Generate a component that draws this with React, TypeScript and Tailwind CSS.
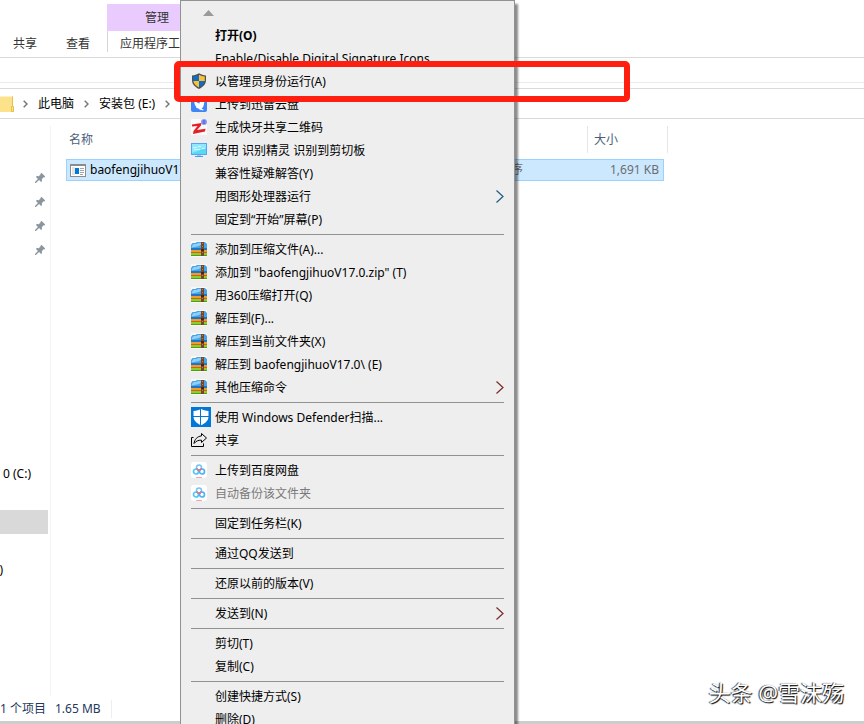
import React from 'react';

type IconName =
  | 'shield'
  | 'xunlei'
  | 'kuaiya'
  | 'monitor'
  | 'archive'
  | 'defender'
  | 'share'
  | 'baidu';

interface MenuItem {
  label: string;
  icon?: IconName;
  bold?: boolean;
  disabled?: boolean;
  arrow?: string;
}

const menuGroups: MenuItem[][] = [
  [
    { label: '打开(O)', bold: true },
    { label: 'Enable/Disable Digital Signature Icons' },
    { label: '以管理员身份运行(A)', icon: 'shield' },
    { label: '上传到迅雷云盘', icon: 'xunlei' },
    { label: '生成快牙共享二维码', icon: 'kuaiya' },
    { label: '使用 识别精灵 识别到剪切板', icon: 'monitor' },
    { label: '兼容性疑难解答(Y)' },
    { label: '用图形处理器运行', arrow: 'text-[#1f5a80]' },
    { label: '固定到“开始”屏幕(P)' },
  ],
  [
    { label: '添加到压缩文件(A)...', icon: 'archive' },
    { label: '添加到 "baofengjihuoV17.0.zip" (T)', icon: 'archive' },
    { label: '用360压缩打开(Q)', icon: 'archive' },
    { label: '解压到(F)...', icon: 'archive' },
    { label: '解压到当前文件夹(X)', icon: 'archive' },
    { label: '解压到 baofengjihuoV17.0\\ (E)', icon: 'archive' },
    { label: '其他压缩命令', icon: 'archive', arrow: 'text-[#7a2a2a]' },
  ],
  [
    { label: '使用 Windows Defender扫描...', icon: 'defender' },
    { label: '共享', icon: 'share' },
  ],
  [
    { label: '上传到百度网盘', icon: 'baidu' },
    { label: '自动备份该文件夹', icon: 'baidu', disabled: true },
  ],
  [{ label: '固定到任务栏(K)' }],
  [{ label: '通过QQ发送到' }],
  [{ label: '还原以前的版本(V)' }],
  [{ label: '发送到(N)', arrow: 'text-[#7a2a2a]' }],
  [{ label: '剪切(T)' }, { label: '复制(C)' }],
  [{ label: '创建快捷方式(S)' }, { label: '删除(D)' }],
];

const MenuIcon: React.FC<{ name: IconName }> = ({ name }) => {
  switch (name) {
    case 'shield':
      return (
        <svg width="16" height="16" viewBox="0 0 16 16">
          <path d="M8 .3C6 1.600 3.600 2.300 1 2.400V7c0 4.200 2.800 7 7 8.900 4.200-1.900 7-4.700 7-8.900V2.400C12.400 2.300 10 1.600 8 .3Z" fill="#4b5056" />
          <path d="M8 1.700C6.200 2.700 4.300 3.300 2.200 3.500V8H8Z" fill="#0f6cc4" />
          <path d="M8 1.700c1.800 1 3.700 1.600 5.800 1.800V8H8Z" fill="#fdbf35" />
          <path d="M2.300 8H8v6.500c-3.100-1.500-5.200-3.600-5.700-6.500Z" fill="#fdbf35" />
          <path d="M13.700 8H8v6.500c3.100-1.500 5.200-3.600 5.700-6.500Z" fill="#0f6cc4" />
        </svg>
      );
    case 'xunlei':
      return (
        <svg width="16" height="16" viewBox="0 0 16 16">
          <rect width="16" height="16" rx="2" fill="#3f85f5" />
          <path d="M3.500 3.500c1 2.500 3 3.500 5 4 0-2 1.500-3.500 4-3.500l1.500 1.500-1 1.500c0 3-1 4.500-2.500 5.500l2.500 1.500c-2.500.5-4.500 0-5.500-1.500L5.500 12 5 10.500c-1.500-1.500-2-4-1.500-7Z" fill="#fff" />
        </svg>
      );
    case 'kuaiya':
      return (
        <svg width="16" height="16" viewBox="0 0 16 16">
          <rect width="16" height="16" rx="1" fill="#fafafa" />
          <path d="M1 5.500 10.500 4 10 6.500 6 11l8.500-1.200-.5 2.600L2 15l.5-3L6.500 7 1 7.600Z" fill="#e32227" />
          <circle cx="13" cy="3" r="3" fill="#8b9af3" />
          <path d="M11.500 2h3M11.500 4h3M13 1v4" stroke="#4c5edb" strokeWidth=".7" />
        </svg>
      );
    case 'monitor':
      return (
        <svg width="16" height="16" viewBox="0 0 16 16">
          <rect x=".5" y="1.500" width="15" height="11" fill="#57d8f7" stroke="#5aa5f2" />
          <path d="M1 2h14v4L1 11Z" fill="#8de9fb" />
          <path d="M2 5.500h4M7 4.500h3M3 7.500h6M11 6.500h3" stroke="#d2f8ff" />
          <path d="M4 14.500h8" stroke="#4e9bec" />
          <path d="M6 13.500h4" stroke="#9cc8f5" />
        </svg>
      );
    case 'archive':
      return (
        <svg width="16" height="16" viewBox="0 0 16 16">
          <rect width="16" height="16" fill="#f8f8f8" />
          <path d="M0 4 1.500 2h3L6 1h8l2 2v5H0Z" fill="#4aa3e4" />
          <path d="M1 5 2.500 3h3L7 2h5L8 5 1 6.500Z" fill="#8fd0f6" />
          <path d="M0 7h16v2H0Z" fill="#1c78c6" />
          <path d="M0 9h16v2H0Z" fill="#f49a2a" />
          <path d="M0 11h16v1H0Z" fill="#c9651f" />
          <path d="M0 12h16v2H0Z" fill="#8bcf2c" />
          <path d="M0 14h16v1H0Z" fill="#579c19" />
          <rect x="10" y="1" width="3" height="14" fill="#7d4421" />
          <path d="M11.500 2v12" stroke="#a5815f" strokeDasharray="1 2" />
          <rect x="10" y="8" width="3" height="2" fill="#4a2413" />
        </svg>
      );
    case 'defender':
      return (
        <svg width="20" height="20" viewBox="0 0 20 20">
          <rect width="20" height="20" fill="#0078d7" />
          <path d="M10 1.800C8 3.200 5.500 3.900 2.500 4v5.200c0 4.200 3 7 7.500 9 4.500-2 7.500-4.800 7.500-9V4c-3-.1-5.500-.8-7.500-2.200Z" fill="#fff" />
          <path d="M9.500 1v18M2 9.500h16" stroke="#0078d7" />
        </svg>
      );
    case 'share':
      return (
        <svg width="16" height="16" viewBox="0 0 16 16" fill="none" stroke="#000">
          <path d="M2.500 5.500h-2v9h12v-3" />
          <path d="M10.500 1.500 15.500 6l-5 4.500V8.200C7 8 5 9.200 3 11.500c.5-4 3-7 7.500-7.600Z" strokeLinejoin="round" />
        </svg>
      );
    case 'baidu':
      return (
        <svg width="16" height="16" viewBox="0 0 16 16" fill="none">
          <rect width="16" height="16" rx="3" fill="#fff" />
          <circle cx="8" cy="5.500" r="2.500" stroke="#6fc6f6" strokeWidth="1.500" />
          <circle cx="5" cy="9.500" r="2.500" stroke="#4bc8f8" strokeWidth="1.700" />
          <circle cx="11" cy="9.500" r="2.500" stroke="#4bb2f5" strokeWidth="1.700" />
          <path d="M5.500 6.500 8 8.700l2.500-2.200" stroke="#f26b81" strokeWidth="1.500" />
          <path d="M5 15.500h6" stroke="#f6a3b4" />
        </svg>
      );
  }
};

const SubmenuArrow: React.FC<{ className: string }> = ({ className }) => (
  <svg width="8" height="14" viewBox="0 0 8 14" fill="none" className={className}>
    <path d="M.5.500 7 6.500.5 12.500" stroke="currentColor" strokeWidth="1.200" />
  </svg>
);

const Crumb: React.FC = () => (
  <svg width="5" height="8" viewBox="0 0 5 8" fill="none" className="shrink-0">
    <path d="M.7.700 4 4 .7 7.300" stroke="#777" strokeWidth="1.500" />
  </svg>
);

const Pin: React.FC = () => (
  <svg width="10" height="10" viewBox="0 0 11 11" fill="#8a959e">
    <path d="M6 .5 7.300 0 11 3.700l-.5 1.300-1-.2-2 2 .2 2.200-1 1L4.500 7.800 1 11H0v-1l3.200-3.500L1 4.300l1-1 2.200.2 2-2Z" />
  </svg>
);

const Ribbon = () => (
  <header className="flex h-[58px] items-end border-b border-[#dadada]">
    <button className="ml-[13px] mb-1 h-[18px]">共享</button>
    <button className="ml-[29px] mb-1 h-[18px]">查看</button>
    <div className="ml-[17px] flex h-[53px] w-[146px] flex-col">
      <div className="flex h-[27px] items-center justify-center bg-[#e9cbfd] pr-[46px]">管理</div>
      <button className="h-[21px] border-l border-[#d5d5d5] pl-3 pt-1 text-left">应用程序工具</button>
    </div>
  </header>
);

const AddressBar = () => (
  <nav className="flex h-[31px] items-center border-y border-[#dadada] text-black">
    <svg width="14" height="16" viewBox="0 0 14 16" className="shrink-0">
      <path d="M0 .5h13v10h1V16H0Z" fill="#fde28c" />
      <path d="M12.500.500v10M11.500 10.500h2v5h-2Z" fill="none" stroke="#e7bf4b" />
    </svg>
    <div className="ml-[9px] flex items-center gap-[10px]">
      <Crumb />
      <a href="#pc">此电脑</a>
      <Crumb />
      <a href="#e">安装包 (E:)</a>
      <Crumb />
    </div>
  </nav>
);

const NavPane = () => (
  <aside className="w-[51px] shrink-0 overflow-hidden border-r border-[#f3f3f3] pt-10 text-black">
    {[1, 2, 3, 4].map((n) => (
      <div key={n} className="flex h-6 items-center pl-[35px]">
        <Pin />
      </div>
    ))}
    <div className="mt-50 flex h-6 items-center whitespace-nowrap pl-[3px]">0 (C:)</div>
    <div className="mt-6 h-6 w-12 bg-[#d9d9d9]" />
    <div className="mt-6 flex h-6 w-[3px] items-center justify-end">)</div>
  </aside>
);

const FileIcon = () => (
  <svg width="16" height="13" viewBox="0 0 16 13" className="shrink-0">
    <rect x=".5" y=".5" width="15" height="12" fill="#fff" stroke="#8c8c8c" />
    <path d="M0 1.500h16" stroke="#8c8c8c" />
    <rect x="2" y="3" width="3" height="8" fill="#e3e3e3" />
    <rect x="5" y="4" width="4" height="6" fill="#0078d7" />
    <path d="M10 4.500h4M10 6.500h4M10 8.500h4M10 10.500h3" stroke="#a5a5a5" />
  </svg>
);

const FileList = () => (
  <main className="flex-1 overflow-hidden pl-[15px]">
    <table className="w-[602px] table-fixed border-separate border-spacing-0 text-left">
      <colgroup>
        <col />
        <col className="w-[120px]" />
        <col className="w-[76px]" />
        <col className="w-1" />
      </colgroup>
      <thead className="text-[#4c607a]">
        <tr>
          <th className="p-0 pb-[6px] font-normal">
            <div className="flex h-[27px] items-center pl-[3px]">名称</div>
          </th>
          <th className="p-0 pb-[6px] font-normal">
            <div className="flex h-[27px] items-center border-r border-[#e5e5e5] pl-[6px]">类型</div>
          </th>
          <th colSpan={2} className="p-0 pb-[6px] font-normal">
            <div className="flex h-[27px] items-center border-r border-[#e5e5e5] pl-[6px]">大小</div>
          </th>
        </tr>
      </thead>
      <tbody>
        <tr className="h-[22px] text-[#6d6d6d]">
          <td className="border-y border-l border-[#99d1ff] bg-[#cce8ff] p-0 pl-[3px]">
            <div className="flex items-center gap-1 leading-5 text-black">
              <FileIcon />
              baofengjihuoV17.0
            </div>
          </td>
          <td className="border-y border-[#99d1ff] bg-[#cce8ff] p-0 pl-[7px]">应用程序</td>
          <td className="border-y border-r border-[#99d1ff] bg-[#cce8ff] p-0 pr-1 text-right">1,691 KB</td>
          <td className="p-0" />
        </tr>
      </tbody>
    </table>
  </main>
);

const ContextMenu = () => (
  <div role="menu" className="absolute left-[180px] top-0 w-[335px] border border-[#929292] bg-[#eeeeee] text-black shadow-[3px_4px_2px_rgba(0,0,0,0.45)]">
    <div className="flex h-[23px] items-center pl-[22px]">
      <svg width="11" height="6" viewBox="0 0 11 6">
        <path d="M5.500 0 11 6H0Z" fill="#9a9a9a" />
      </svg>
    </div>
    {menuGroups.map((group, index) => (
      <React.Fragment key={index}>
        {index > 0 && <hr className="my-[3px] ml-[10px] mr-[10px] border-[#919191]" />}
        {group.map((item) => (
          <button
            key={item.label}
            role="menuitem"
            disabled={item.disabled}
            className={`flex h-[23px] w-full items-center whitespace-nowrap pl-[10px] pr-[10px] text-left ${
              item.bold ? 'font-bold' : ''
            } ${item.disabled ? 'text-[#7a7a7a]' : ''}`}
          >
            <span className="flex h-[22px] w-6 shrink-0 items-center self-start">
              {item.icon && <MenuIcon name={item.icon} />}
            </span>
            <span className="flex-1">{item.label}</span>
            {item.arrow && <SubmenuArrow className={item.arrow} />}
          </button>
        ))}
      </React.Fragment>
    ))}
  </div>
);

export default function App() {
  return (
    <div className="relative flex h-screen flex-col overflow-hidden bg-white font-['Noto_Sans','Noto_Sans_CJK_SC',sans-serif] text-[12px] leading-[18px] text-[#333]">
      <Ribbon />
      <div className="mb-[5px] h-[25px] shrink-0 border-b border-[#ebebeb]" />
      <AddressBar />
      <div className="flex min-h-0 flex-1 pt-[7px]">
        <NavPane />
        <FileList />
      </div>
      <footer className="flex h-7 shrink-0 items-center border-b-3 border-[#cdcdcd] text-[#24395c]">
        <span>1 个项目</span>
        <span className="ml-[9px] border-r border-[#eee] pr-[10px]">1.65 MB</span>
      </footer>

      <ContextMenu />

      {/* Highlight around the run-as-administrator entry */}
      <div className="pointer-events-none absolute left-[174px] top-[61px] h-[41px] w-[456px] rounded-[5px] border-6 border-[#ff1f10]" />

      <div className="absolute bottom-[14px] right-5 text-[22px] leading-9 text-white [text-shadow:1px_1px_1px_#000,-1px_0_1px_#333]">
        头条 @雪沫殇
      </div>
    </div>
  );
}
